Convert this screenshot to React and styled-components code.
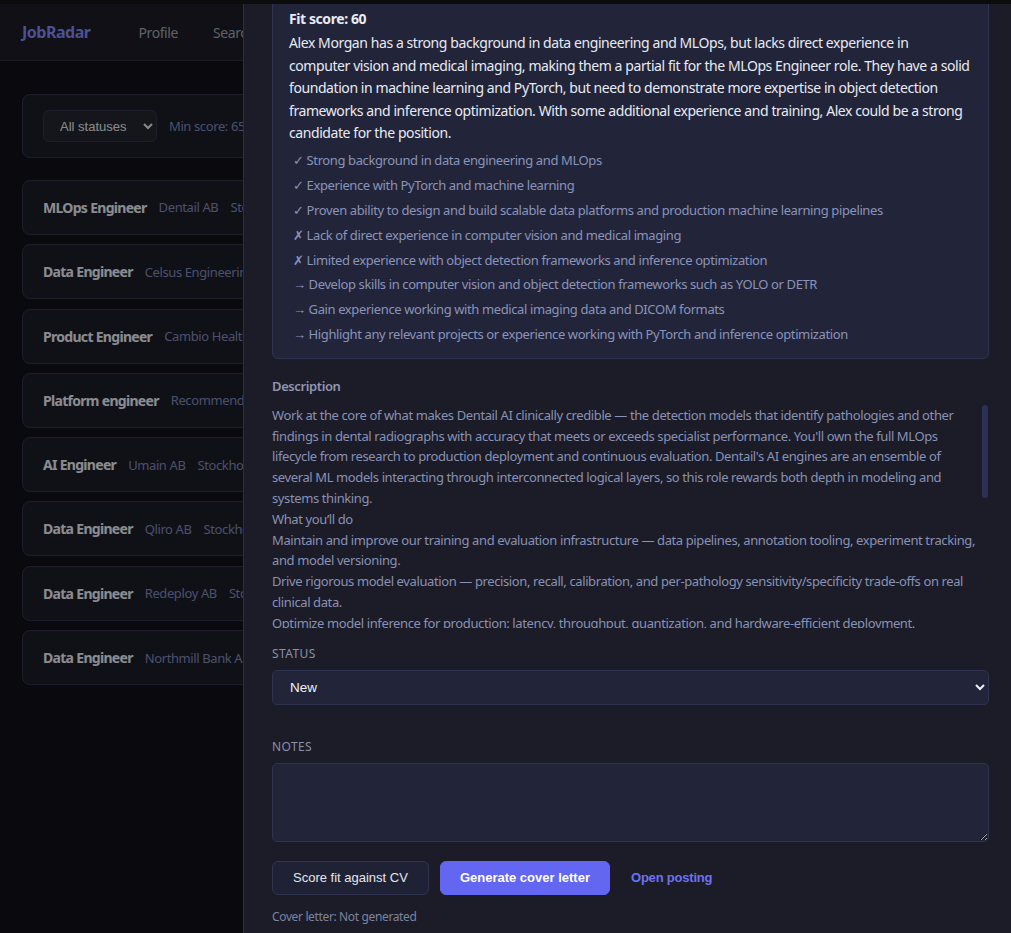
import React, { useLayoutEffect, useRef } from "react";
import styled, { createGlobalStyle } from "styled-components";

const GlobalStyle = createGlobalStyle`
  html, body {
    margin: 0;
    background: #111118;
    color: #e5e7eb;
    font-family: "Noto Sans", "Open Sans", sans-serif;
    color-scheme: dark;
  }
  body {
    border-top: 4px solid #141416;
  }
  * {
    box-sizing: border-box;
    letter-spacing: -0.03em;
  }
`;

const Nav = styled.header`
  height: 57px;
  display: flex;
  align-items: center;
  gap: 35px;
  padding: 0 22px;
  background: #1c1c25;
  border-bottom: 1px solid #2c2e3c;
`;

const Brand = styled.div`
  font-weight: 700;
  font-size: 16px;
  color: #7f88f0;
  margin-right: 13px;
`;

const NavLink = styled.a`
  font-size: 14px;
  color: #9ca3af;
  text-decoration: none;
`;

const Main = styled.main`
  padding: 33px 22px;
  display: flex;
  flex-direction: column;
  gap: 9.3px;
`;

const FilterBar = styled.div`
  display: flex;
  align-items: center;
  gap: 12px;
  height: 64px;
  padding: 0 20px;
  margin-bottom: 12.7px;
  background: #1c1d26;
  border: 1px solid #30334a;
  border-radius: 8px;
`;

const FilterSelect = styled.select`
  width: 114px;
  height: 32px;
  padding: 0 10px 0 12px;
  font-family: "Liberation Sans", Arial, sans-serif;
  font-size: 13px;
  letter-spacing: normal;
  color: #e5e7eb;
  background: #23252f;
  border: 1px solid #30334a;
  border-radius: 6px;
`;

const Muted = styled.span`
  font-size: 13px;
  color: #7c86b8;
  white-space: nowrap;
`;

const JobRow = styled.div`
  height: 55px;
  display: flex;
  align-items: center;
  gap: 12px;
  padding: 0 20px;
  background: #1c1d26;
  border: 1px solid #30334a;
  border-radius: 8px;
  white-space: nowrap;
  overflow: hidden;
`;

const JobTitle = styled.span`
  font-weight: 700;
  font-size: 14px;
  letter-spacing: -0.05em;
  color: #e8eaf2;
`;

const Backdrop = styled.div`
  position: fixed;
  inset: 0;
  background: rgba(0, 0, 0, 0.4);
`;

const Drawer = styled.aside`
  position: fixed;
  top: 4px;
  right: 0;
  bottom: 0;
  width: 768px;
  padding: 0 22px 24px 28px;
  background: #1b1c27;
  border-left: 1px solid #2c2f44;
  overflow-y: auto;
  scrollbar-width: none;
  &::-webkit-scrollbar { display: none; }
`;

const DrawerHead = styled.div`
  padding: 24px 0 20px;
`;

const DrawerTitle = styled.h2`
  margin: 0 0 6px;
  font-size: 20px;
  color: #f1f2f8;
`;

const FitCard = styled.section`
  padding: 16px 16px 13px;
  background: #222539;
  border: 1px solid #2f3350;
  border-radius: 6px;
  color: #e8eaf4;
  font-size: 14px;
  line-height: 22.4px;
`;

const FitScore = styled.div`
  font-weight: 700;
  margin-bottom: 2px;
`;

const Summary = styled.p`
  margin: 0;
`;

const Points = styled.ul`
  list-style: none;
  margin: 6px 0 0;
  padding: 0 0 0 4px;
  font-size: 13px;
  line-height: 20.8px;
  color: #8a93b9;
`;

const Point = styled.li`
  margin-bottom: 4px;
  &:last-child { margin-bottom: 0; }
`;

const Field = styled.div`
  margin-top: ${p => p.$top || 19}px;
`;

const SectionLabel = styled.div`
  font-size: 13px;
  font-weight: 600;
  color: #9096b0;
  line-height: 16px;
  margin-bottom: 11px;
`;

const FieldLabel = styled.div`
  font-size: 12px;
  letter-spacing: 0.4px;
  text-transform: uppercase;
  color: #8a90a8;
  line-height: 14px;
  margin-bottom: 9px;
`;

const DescriptionWrap = styled.div`
  position: relative;
`;

const DescriptionBox = styled.div`
  max-height: 223px;
  overflow-y: auto;
  padding-right: 12px;
  font-size: 13px;
  line-height: 20.8px;
  color: #8991b5;
  white-space: pre-line;
  scrollbar-width: none;
  &::-webkit-scrollbar { display: none; }
`;

const ScrollThumb = styled.div`
  position: absolute;
  top: 0;
  right: 1px;
  width: 6px;
  height: 93px;
  border-radius: 3px;
  background: #2c3052;
`;

const StatusSelect = styled.select`
  width: 100%;
  height: 35px;
  padding: 0 12px 0 13px;
  font-family: "Liberation Sans", Arial, sans-serif;
  font-size: 13.5px;
  letter-spacing: normal;
  color: #eef0f8;
  background: #222539;
  border: 1px solid #2f3350;
  border-radius: 5px;
`;

const Notes = styled.textarea`
  display: block;
  width: 100%;
  height: 79px;
  padding: 10px 12px;
  font-family: "Liberation Sans", Arial, sans-serif;
  font-size: 13px;
  letter-spacing: normal;
  color: #eef0f8;
  background: #222539;
  border: 1px solid #2f3350;
  border-radius: 5px;
`;

const Actions = styled.div`
  display: flex;
  align-items: center;
  gap: 11px;
  margin-top: 19px;
`;

const Button = styled.button`
  height: 34px;
  padding: 0 ${p => (p.$primary ? 19 : 20)}px;
  font-family: "Liberation Sans", Arial, sans-serif;
  font-size: 13px;
  letter-spacing: normal;
  font-weight: ${p => (p.$primary ? 700 : 400)};
  color: ${p => (p.$primary ? "#ffffff" : "#e5e7eb")};
  background: ${p => (p.$primary ? "#6366f1" : "#1f2234")};
  border: 1px solid ${p => (p.$primary ? "#6366f1" : "#2f3350")};
  border-radius: 6px;
`;

const PostingLink = styled.a`
  margin-left: 10px;
  font-family: "Liberation Sans", Arial, sans-serif;
  font-size: 13px;
  letter-spacing: -0.2px;
  font-weight: 700;
  color: #6d72f3;
  text-decoration: none;
`;

const CoverNote = styled.div`
  margin-top: 13px;
  font-size: 12px;
  color: #7c84a0;
`;

const jobs = [
  ["MLOps Engineer", "Dentail AB", "Stockholm"],
  ["Data Engineer", "Celsus Engineering", "Stockholm"],
  ["Product Engineer", "Cambio Healthcare", "Stockholm"],
  ["Platform engineer", "Recommended AB", "Stockholm"],
  ["AI Engineer", "Umain AB", "Stockholm"],
  ["Data Engineer", "Qliro AB", "Stockholm"],
  ["Data Engineer", "Redeploy AB", "Stockholm"],
  ["Data Engineer", "Northmill Bank AB", "Stockholm"],
];

const points = [
  "✓ Strong background in data engineering and MLOps",
  "✓ Experience with PyTorch and machine learning",
  "✓ Proven ability to design and build scalable data platforms and production machine learning pipelines",
  "✗ Lack of direct experience in computer vision and medical imaging",
  "✗ Limited experience with object detection frameworks and inference optimization",
  "→ Develop skills in computer vision and object detection frameworks such as YOLO or DETR",
  "→ Gain experience working with medical imaging data and DICOM formats",
  "→ Highlight any relevant projects or experience working with PyTorch and inference optimization",
];

const description = `Work at the core of what makes Dentail AI clinically credible — the detection models that identify pathologies and other findings in dental radiographs with accuracy that meets or exceeds specialist performance. You'll own the full MLOps lifecycle from research to production deployment and continuous evaluation. Dentail's AI engines are an ensemble of several ML models interacting through interconnected logical layers, so this role rewards both depth in modeling and systems thinking.
What you’ll do
Maintain and improve our training and evaluation infrastructure — data pipelines, annotation tooling, experiment tracking, and model versioning.
Drive rigorous model evaluation — precision, recall, calibration, and per-pathology sensitivity/specificity trade-offs on real clinical data.
Optimize model inference for production: latency, throughput, quantization, and hardware-efficient deployment.
Collaborate with clinicians and product teams to turn research results into reliable features.
What we’re looking for
Several years of experience shipping machine learning systems to production.
Strong Python and PyTorch skills, and experience with object detection architectures.`;

export default function App() {
  const drawerRef = useRef(null);
  const cardRef = useRef(null);

  useLayoutEffect(() => {
    if (drawerRef.current && cardRef.current) {
      drawerRef.current.scrollTop = cardRef.current.offsetTop + 13;
    }
  }, []);

  return (
    <>
      <GlobalStyle />
      <Nav>
        <Brand>JobRadar</Brand>
        <NavLink>Profile</NavLink>
        <NavLink>Search</NavLink>
        <NavLink>Jobs</NavLink>
      </Nav>
      <Main>
        <FilterBar>
          <FilterSelect defaultValue="all">
            <option value="all">All statuses</option>
            <option value="new">New</option>
          </FilterSelect>
          <Muted>Min score: 65</Muted>
        </FilterBar>
        {jobs.map(([title, company, city], i) => (
          <JobRow key={i}>
            <JobTitle>{title}</JobTitle>
            <Muted>{company}</Muted>
            <Muted>{city}</Muted>
          </JobRow>
        ))}
      </Main>
      <Backdrop />
      <Drawer ref={drawerRef}>
        <DrawerHead>
          <DrawerTitle>MLOps Engineer</DrawerTitle>
          <Muted>Dentail AB · Stockholm</Muted>
        </DrawerHead>
        <FitCard ref={cardRef}>
          <FitScore>Fit score: 60</FitScore>
          <Summary>
            Alex Morgan has a strong background in data engineering and MLOps, but lacks direct experience in computer vision and medical imaging, making them a partial fit for the MLOps Engineer role. They have a solid foundation in machine learning and PyTorch, but need to demonstrate more expertise in object detection frameworks and inference optimization. With some additional experience and training, Alex could be a strong candidate for the position.
          </Summary>
          <Points>
            {points.map((p, i) => (
              <Point key={i}>{p}</Point>
            ))}
          </Points>
        </FitCard>
        <Field>
          <SectionLabel>Description</SectionLabel>
          <DescriptionWrap>
            <DescriptionBox>{description}</DescriptionBox>
            <ScrollThumb />
          </DescriptionWrap>
        </Field>
        <Field>
          <FieldLabel>Status</FieldLabel>
          <StatusSelect defaultValue="new">
            <option value="new">New</option>
            <option value="applied">Applied</option>
            <option value="rejected">Rejected</option>
          </StatusSelect>
        </Field>
        <Field $top={35}>
          <FieldLabel>Notes</FieldLabel>
          <Notes />
        </Field>
        <Actions>
          <Button>Score fit against CV</Button>
          <Button $primary>Generate cover letter</Button>
          <PostingLink>Open posting</PostingLink>
        </Actions>
        <CoverNote>Cover letter: Not generated</CoverNote>
      </Drawer>
    </>
  );
}
